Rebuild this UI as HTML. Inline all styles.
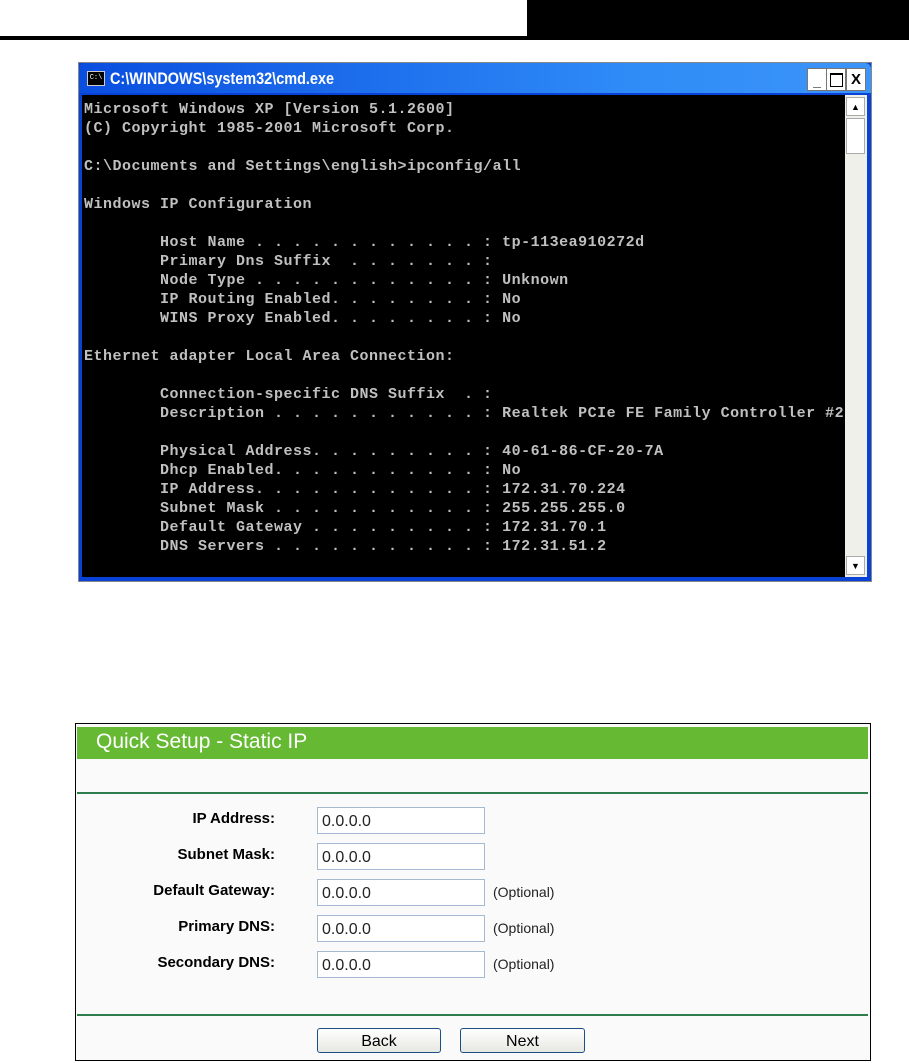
<!DOCTYPE html>
<html><head><style>
body{margin:0;width:909px;height:1063px;background:#fff;position:relative;overflow:hidden;font-family:"Liberation Sans",Arial,sans-serif}
.a{position:absolute}
pre{margin:0;font-family:"Liberation Mono",monospace;font-weight:bold;font-size:15px;letter-spacing:0.5px;line-height:19px;color:#c0c0c0}
.lab{position:absolute;right:634px;font-weight:bold;font-size:15px;color:#000}
.inp{position:absolute;left:317px;border:1px solid #a5b9d0;background:#fff;font-size:16px;line-height:27px;padding-left:4px;box-sizing:border-box;width:168px;height:27px;color:#222}
.opt{position:absolute;left:493px;font-size:14px;color:#222}
.btn{position:absolute;top:1028px;height:25px;border:1px solid #1c4e86;border-radius:3px;background:linear-gradient(#fefefe,#e8e8e2);font-size:16px;text-align:center;line-height:25px;box-sizing:border-box}
</style></head><body>
<div class="a" style="left:527px;top:0;width:382px;height:38px;background:#000"></div>
<div class="a" style="left:0;top:36px;width:909px;height:4px;background:#000"></div>

<div class="a" style="left:78px;top:62px;width:794px;height:520px;background:#0842d6;border:1px solid #888;box-sizing:border-box"></div>
<div class="a" style="left:79px;top:63px;width:792px;height:30px;background:linear-gradient(90deg,#0a4ee0,#2f8cf7 70%,#3b94f8);border-radius:6px 6px 0 0"></div>
<div class="a" style="left:87px;top:71px;width:16px;height:13px;background:#000;border:1px solid #ccc;color:#fff;font-size:7px;line-height:12px;text-align:center;font-family:Liberation Mono">C:\</div>
<div class="a" style="left:110px;top:69px;color:#fff;font-size:17px;font-weight:bold;transform:scaleX(0.85);transform-origin:left">C:\WINDOWS\system32\cmd.exe</div>
<div class="a" style="left:807px;top:68px;width:18px;height:21px;background:#fff;border:1px solid #777;font-weight:bold;text-align:center;line-height:24px;font-size:14px">_</div>
<div class="a" style="left:826px;top:68px;width:18px;height:21px;background:#fff;border:1px solid #777;text-align:center"><div style="width:11px;height:11px;border:1px solid #000;border-top-width:2px;margin:4px auto"></div></div>
<div class="a" style="left:846px;top:68px;width:18px;height:21px;background:#fff;border:1px solid #777;font-weight:bold;text-align:center;line-height:21px;font-size:15px">X</div>
<div class="a" style="left:82px;top:95px;width:763px;height:482px;background:#000;overflow:hidden">
<pre style="padding:5px 0 0 2px">Microsoft Windows XP [Version 5.1.2600]
(C) Copyright 1985-2001 Microsoft Corp.

C:\Documents and Settings\english>ipconfig/all

Windows IP Configuration

        Host Name . . . . . . . . . . . . : tp-113ea910272d
        Primary Dns Suffix  . . . . . . . :
        Node Type . . . . . . . . . . . . : Unknown
        IP Routing Enabled. . . . . . . . : No
        WINS Proxy Enabled. . . . . . . . : No

Ethernet adapter Local Area Connection:

        Connection-specific DNS Suffix  . :
        Description . . . . . . . . . . . : Realtek PCIe FE Family Controller #2

        Physical Address. . . . . . . . . : 40-61-86-CF-20-7A
        Dhcp Enabled. . . . . . . . . . . : No
        IP Address. . . . . . . . . . . . : 172.31.70.224
        Subnet Mask . . . . . . . . . . . : 255.255.255.0
        Default Gateway . . . . . . . . . : 172.31.70.1
        DNS Servers . . . . . . . . . . . : 172.31.51.2</pre></div>
<div class="a" style="left:845px;top:95px;width:22px;height:482px;background:#f0f0ea"></div>
<div class="a" style="left:846px;top:97px;width:19px;height:19px;background:#fff;border:1px solid #aaa;box-sizing:border-box;font-size:9px;text-align:center;line-height:18px">▲</div>
<div class="a" style="left:846px;top:118px;width:19px;height:36px;background:#fff;border:1px solid #aaa;box-sizing:border-box"></div>
<div class="a" style="left:846px;top:556px;width:19px;height:19px;background:#fff;border:1px solid #aaa;box-sizing:border-box;font-size:9px;text-align:center;line-height:18px">▼</div>

<div class="a" style="left:75px;top:723px;width:796px;height:338px;border:1px solid #000;box-sizing:border-box;background:#fafafa"></div>
<div class="a" style="left:77px;top:727px;width:791px;height:32px;background:#66b933"></div>
<div class="a" style="left:96px;top:730px;color:#fff;font-size:21px">Quick Setup - Static IP</div>
<div class="a" style="left:77px;top:792px;width:791px;height:2px;background:#2e7d4a"></div>
<div class="lab" style="top:810px">IP Address:</div>
<div class="inp" style="top:807px">0.0.0.0</div>
<div class="lab" style="top:846px">Subnet Mask:</div>
<div class="inp" style="top:843px">0.0.0.0</div>
<div class="lab" style="top:882px">Default Gateway:</div>
<div class="inp" style="top:879px">0.0.0.0</div>
<div class="opt" style="top:884px">(Optional)</div>
<div class="lab" style="top:918px">Primary DNS:</div>
<div class="inp" style="top:915px">0.0.0.0</div>
<div class="opt" style="top:920px">(Optional)</div>
<div class="lab" style="top:954px">Secondary DNS:</div>
<div class="inp" style="top:951px">0.0.0.0</div>
<div class="opt" style="top:956px">(Optional)</div>
<div class="a" style="left:77px;top:1014px;width:791px;height:2px;background:#2e7d4a"></div>
<div class="btn" style="left:317px;width:124px">Back</div>
<div class="btn" style="left:460px;width:125px">Next</div>
</body></html>
